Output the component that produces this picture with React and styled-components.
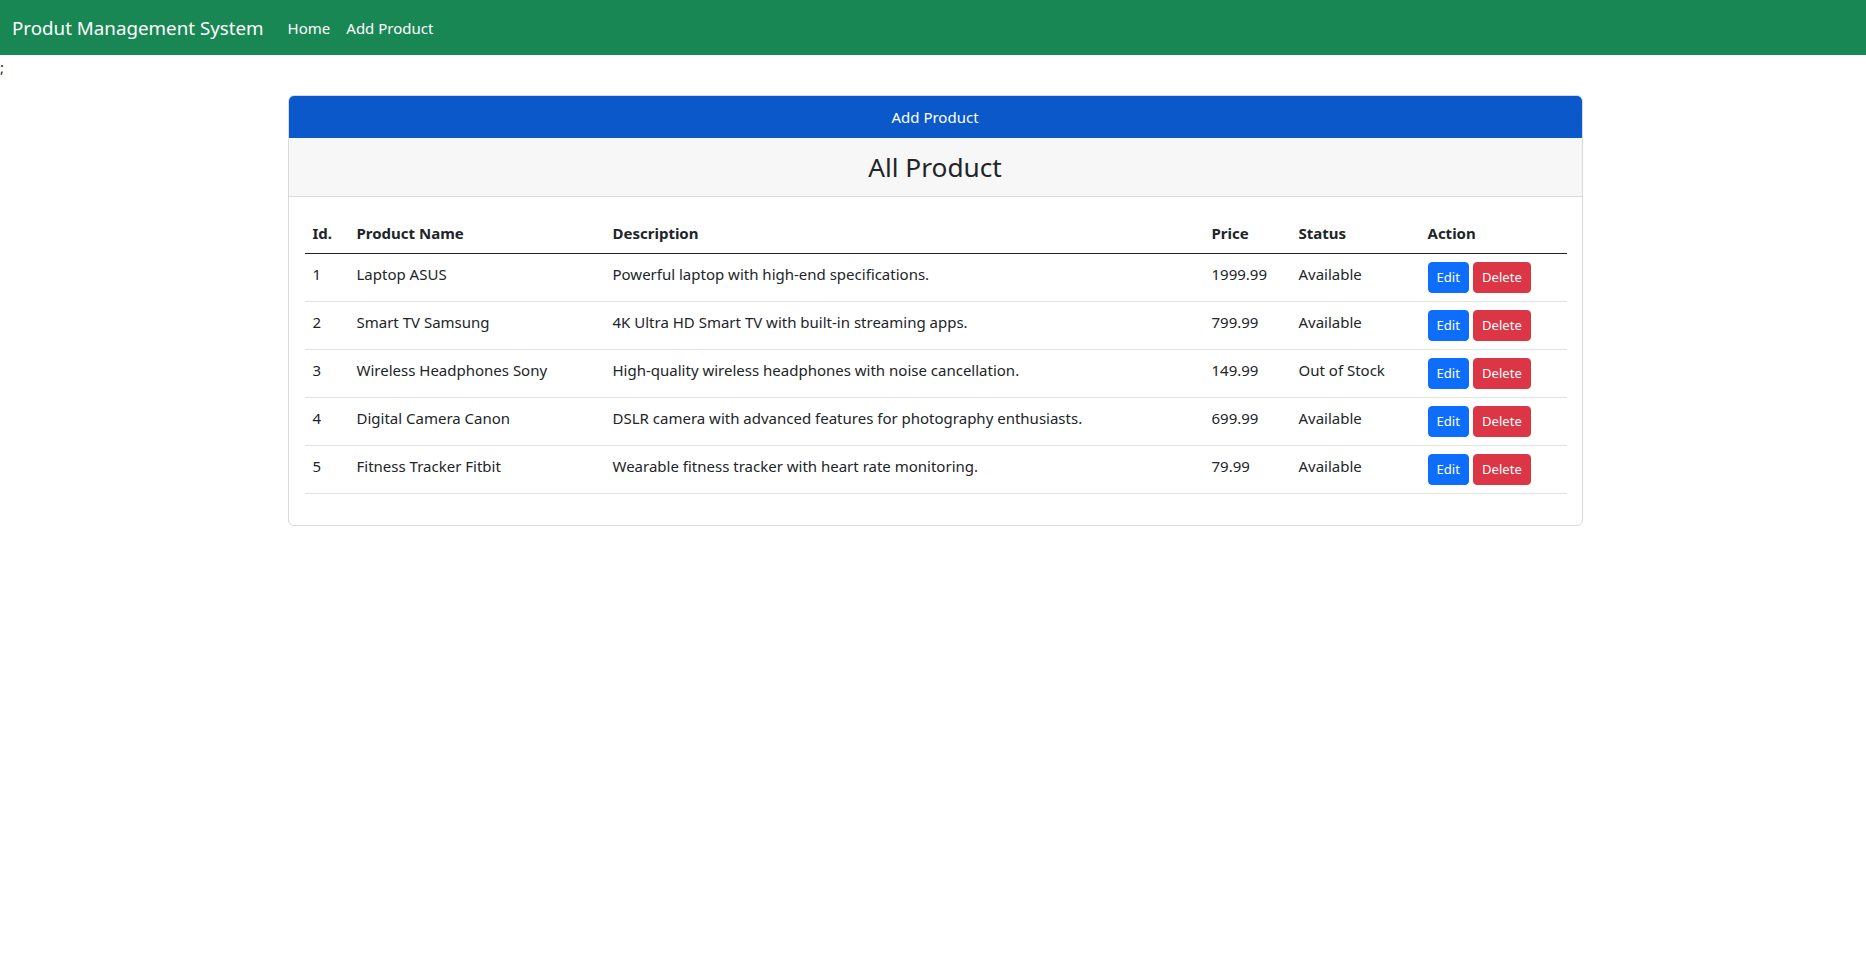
import styled, { createGlobalStyle } from "styled-components";

// Noto Sans at 15/16 of the size gives the widths of the original Segoe UI text
const GlobalStyle = createGlobalStyle`
	body {
		margin: 0;
		font-family: "Noto Sans", "Liberation Sans", sans-serif;
		font-size: 15px;
		line-height: 24px;
		color: #212529;
		background: #fff;
	}
	* {
		box-sizing: border-box;
	}
`;

const NavbarStyled = styled.nav`
	display: flex;
	align-items: center;
	height: 55px;
	padding: 0 12px;
	background: #198754;
`;

const Brand = styled.a`
	margin-right: 16px;
	font-size: 18.75px;
	line-height: 30px;
	color: #fff;
	text-decoration: none;
`;

const NavLink = styled.a`
	padding: 0 8px;
	font-size: 15px;
	line-height: 24px;
	color: #fff;
	text-decoration: none;
`;

const Stray = styled.div`
	line-height: 24px;
`;

const Container = styled.div`
	width: 1295px;
	margin: 16px auto 0;
	position: relative;
	left: 2px;
`;

const Card = styled.div`
	border: 1px solid #d9dadb;
	border-radius: 6px;
	overflow: hidden;
`;

const TopButton = styled.button`
	display: block;
	width: 100%;
	height: 42px;
	border: 0;
	background: #0a58ca;
	color: #fff;
	font-family: inherit;
	font-size: 15px;
	line-height: 24px;
	cursor: pointer;
`;

const CardHeader = styled.div`
	padding: 10px 16px 10px;
	background: #f7f7f7;
	border-bottom: 1px solid #d9dadb;

	h3 {
		margin: 0;
		font-size: 26.25px;
		font-weight: 400;
		line-height: 38px;
		text-align: center;
	}
`;

const CardBody = styled.div`
	padding: 16px;
`;

const Table = styled.table`
	width: 100%;
	table-layout: fixed;
	border-collapse: collapse;
	margin-bottom: 15px;

	th {
		padding: 8px;
		text-align: left;
		font-weight: 700;
		line-height: 24px;
		border-bottom: 1px solid #212529;
	}

	td {
		padding: 8px;
		line-height: 24px;
		vertical-align: top;
		border-bottom: 1px solid #dee2e6;
		white-space: nowrap;
	}
`;

const Actions = styled.div`
	display: flex;
	gap: 4px;
`;

const Btn = styled.button`
	padding: 4px 8px;
	border: 1px solid ${(p) => (p.$variant === "danger" ? "#dc3545" : "#0d6efd")};
	border-radius: 4px;
	background: ${(p) => (p.$variant === "danger" ? "#dc3545" : "#0d6efd")};
	color: #fff;
	font-family: inherit;
	font-size: 13.125px;
	line-height: 21px;
	cursor: pointer;
`;

const products = [
	{ id: 1, name: "Laptop ASUS", description: "Powerful laptop with high-end specifications.", price: "1999.99", status: "Available" },
	{ id: 2, name: "Smart TV Samsung", description: "4K Ultra HD Smart TV with built-in streaming apps.", price: "799.99", status: "Available" },
	{ id: 3, name: "Wireless Headphones Sony", description: "High-quality wireless headphones with noise cancellation.", price: "149.99", status: "Out of Stock" },
	{ id: 4, name: "Digital Camera Canon", description: "DSLR camera with advanced features for photography enthusiasts.", price: "699.99", status: "Available" },
	{ id: 5, name: "Fitness Tracker Fitbit", description: "Wearable fitness tracker with heart rate monitoring.", price: "79.99", status: "Available" },
];

const columns = [44, 256, 599, 87, 129, 147];

export default function App() {
	return (
		<>
			<GlobalStyle />
			<NavbarStyled>
				<Brand href='#'>Produt Management System</Brand>
				<NavLink href='#'>Home</NavLink>
				<NavLink href='#'>Add Product</NavLink>
			</NavbarStyled>
			<Stray>;</Stray>
			<Container>
				<Card>
					<TopButton>Add Product</TopButton>
					<CardHeader>
						<h3>All Product</h3>
					</CardHeader>
					<CardBody>
						<Table>
							<colgroup>
								{columns.map((w, i) => (
									<col key={i} style={{ width: w }} />
								))}
							</colgroup>
							<thead>
								<tr>
									<th>Id.</th>
									<th>Product Name</th>
									<th>Description</th>
									<th>Price</th>
									<th>Status</th>
									<th>Action</th>
								</tr>
							</thead>
							<tbody>
								{products.map((p) => (
									<tr key={p.id}>
										<td>{p.id}</td>
										<td>{p.name}</td>
										<td>{p.description}</td>
										<td>{p.price}</td>
										<td>{p.status}</td>
										<td>
											<Actions>
												<Btn>Edit</Btn>
												<Btn $variant='danger'>Delete</Btn>
											</Actions>
										</td>
									</tr>
								))}
							</tbody>
						</Table>
					</CardBody>
				</Card>
			</Container>
		</>
	);
}
